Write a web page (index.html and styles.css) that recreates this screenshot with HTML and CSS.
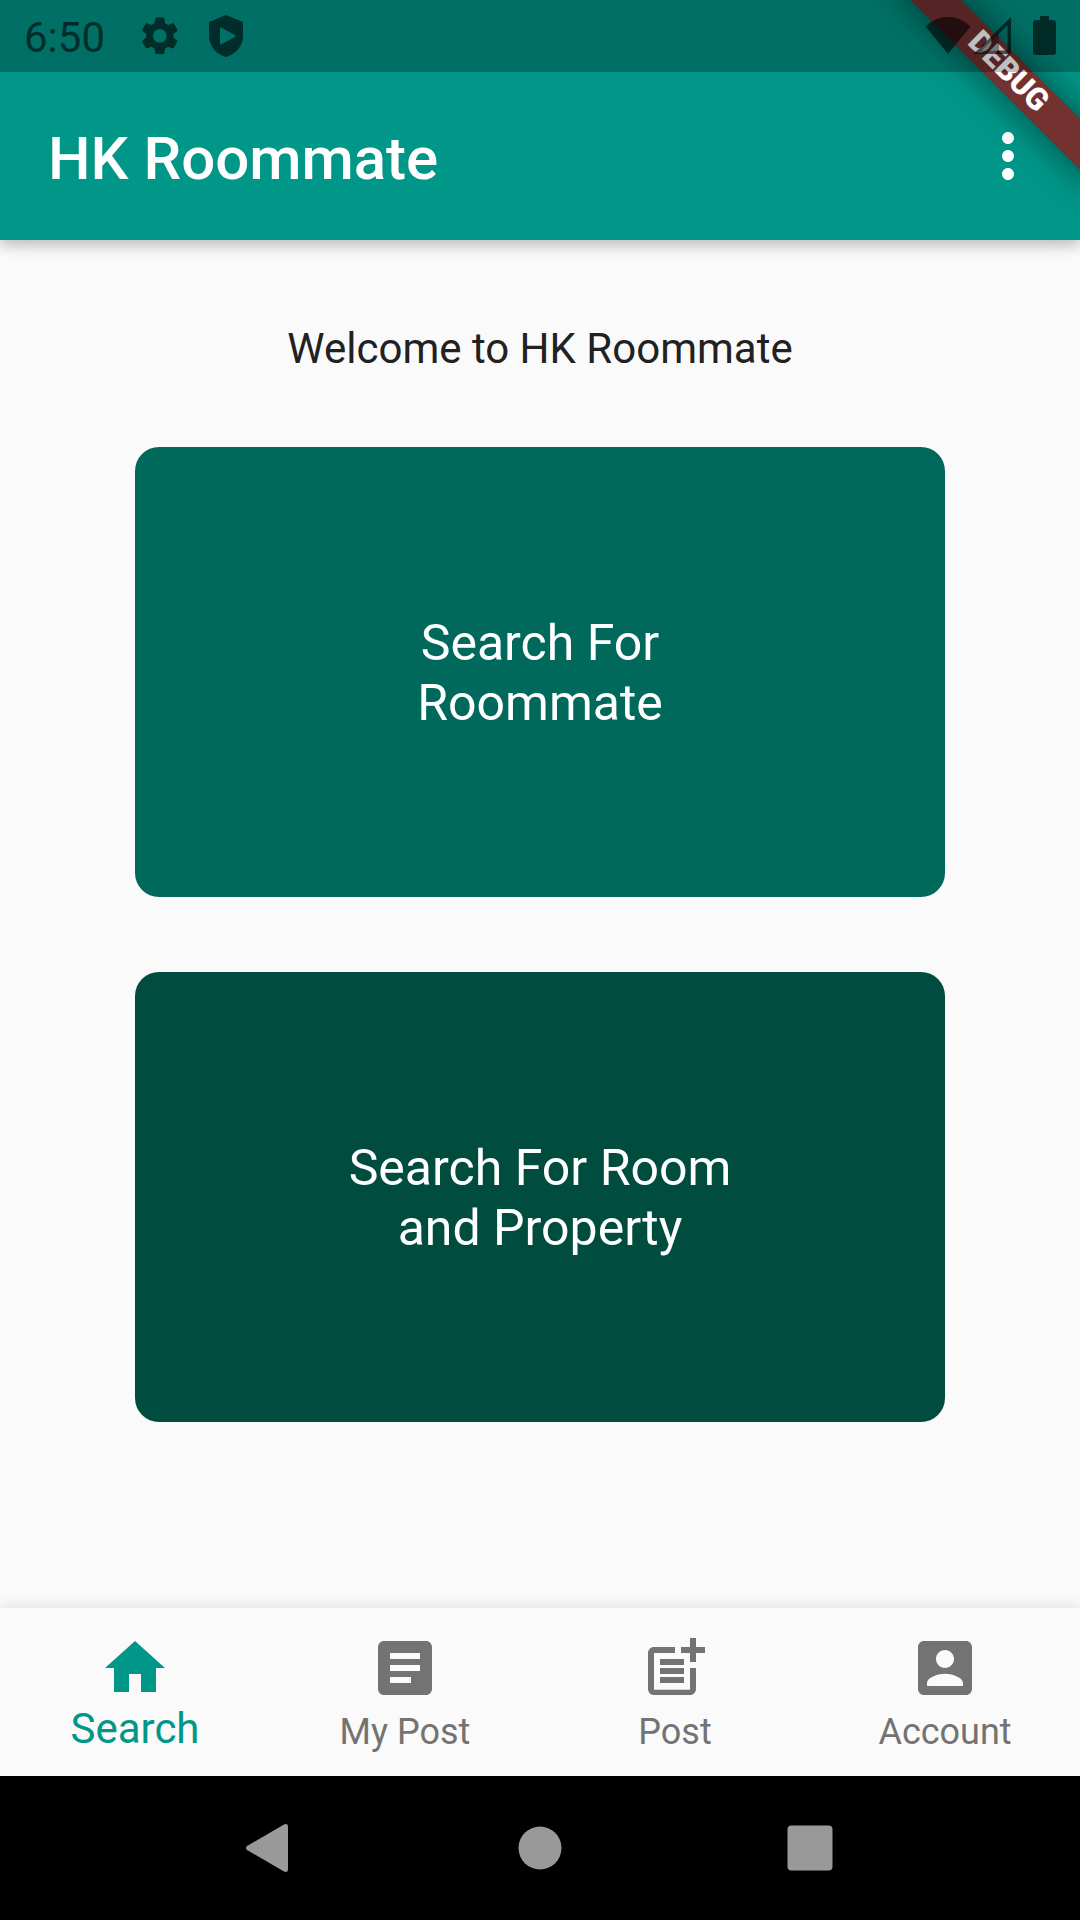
FILE: index.html
```html
<!DOCTYPE html>
<html lang="en">
<head>
<meta charset="utf-8">
<meta name="viewport" content="width=device-width, initial-scale=1">
<title>HK Roommate</title>
<link rel="stylesheet" href="styles.css">
</head>
<body>
<div class="app">
  <header class="top">
    <div class="status-bar">
      <div class="status-group status-left">
        <span class="clock">6:50</span>
        <svg class="status-icon" viewBox="0 0 48 48" aria-hidden="true"><path transform="translate(1 1) scale(1.9)" d="M19.14 12.94c.04-.3.06-.61.06-.94 0-.32-.02-.64-.07-.94l2.03-1.58c.18-.14.23-.41.12-.61l-1.92-3.32c-.12-.22-.37-.29-.59-.22l-2.39.96c-.5-.38-1.03-.7-1.62-.94l-.36-2.54c-.04-.24-.24-.41-.48-.41h-3.84c-.24 0-.43.17-.47.41l-.36 2.54c-.59.24-1.13.57-1.62.94l-2.39-.96c-.22-.08-.47 0-.59.22L2.74 8.87c-.12.21-.08.47.12.61l2.03 1.58c-.05.3-.09.63-.09.94s.02.64.07.94l-2.03 1.58c-.18.14-.23.41-.12.61l1.92 3.32c.12.22.37.29.59.22l2.39-.96c.5.38 1.03.7 1.62.94l.36 2.54c.05.24.24.41.48.41h3.84c.24 0 .44-.17.47-.41l.36-2.54c.59-.24 1.13-.56 1.62-.94l2.39.96c.22.08.47 0 .59-.22l1.92-3.32c.12-.22.07-.47-.12-.61l-2.01-1.58zM12 15.6c-1.98 0-3.6-1.62-3.6-3.6s1.62-3.6 3.6-3.6 3.6 1.62 3.6 3.6-1.62 3.6-3.6 3.6z"/></svg>
        <svg class="status-icon" viewBox="0 0 48 48" aria-hidden="true"><path fill-rule="evenodd" d="M24 3 41 10V24C41 34 34 42 24 45 14 42 7 34 7 24V10ZM18 16V31Q18 33 20 32L33 25Q34 24 33 23L20 16Q18 15 18 16Z"/></svg>
      </div>
      <div class="status-group status-right">
        <svg class="status-icon" viewBox="0 0 48 48" aria-hidden="true"><path d="M1.500 14.500Q11 5 24 5T46.500 14.500L24 42Z"/></svg>
        <svg class="status-icon signal" viewBox="4 0 44 48" aria-hidden="true"><path fill-rule="evenodd" d="M43 5V42H5.500ZM39.500 13 14 38.500H39.500Z"/><path opacity=".6" d="M31 21.500V38.500H14Z"/></svg>
        <svg class="status-icon battery" viewBox="0 0 24 48" aria-hidden="true"><path d="M8 4H17V8H21Q24 8 24 11V40Q24 43 21 43H4Q1 43 1 40V11Q1 8 4 8H8Z"/></svg>
      </div>
    </div>
    <div class="toolbar">
      <h1 class="title">HK Roommate</h1>
      <button class="more" type="button" aria-label="More options">
        <svg class="icon" viewBox="0 0 24 24" aria-hidden="true"><path d="M12 8c1.100 0 2-.9 2-2s-.9-2-2-2-2 .9-2 2 .9 2 2 2zm0 2c-1.100 0-2 .9-2 2s.9 2 2 2 2-.9 2-2-.9-2-2-2zm0 6c-1.100 0-2 .9-2 2s.9 2 2 2 2-.9 2-2-.9-2-2-2z"/></svg>
      </button>
    </div>
    <div class="ribbon-corner"><span class="ribbon">DEBUG</span></div>
  </header>

  <main class="content">
    <p class="welcome">Welcome to HK Roommate</p>
    <button class="card card-roommate" type="button">Search For<br>Roommate</button>
    <button class="card card-property" type="button">Search For Room<br>and Property</button>
  </main>

  <nav class="tabs">
    <a class="tab tab-active" href="#search" aria-current="page">
      <svg class="icon" viewBox="0 0 24 24" aria-hidden="true"><path d="M10 20v-6h4v6h5v-8h3L12 3 2 12h3v8z"/></svg>
      <span class="tab-label">Search</span>
    </a>
    <a class="tab" href="#my-post">
      <svg class="icon" viewBox="0 0 24 24" aria-hidden="true"><path d="M19 3H5c-1.100 0-2 .9-2 2v14c0 1.100.9 2 2 2h14c1.100 0 2-.9 2-2V5c0-1.100-.9-2-2-2zm-5 14H7v-2h7v2zm3-4H7v-2h10v2zm0-4H7V7h10v2z"/></svg>
      <span class="tab-label">My Post</span>
    </a>
    <a class="tab" href="#post">
      <svg class="icon" viewBox="0 0 24 24" aria-hidden="true"><path d="M17 19.220H5V7h7V5H5c-1.100 0-2 .9-2 2v12c0 1.100.9 2 2 2h12c1.100 0 2-.9 2-2v-7h-2zM19 2h-2v3h-3v2h3v3h2V7h3V5h-3zM7 9h8v2H7zM7 12h8v2H7zM7 15h8v2H7z"/></svg>
      <span class="tab-label">Post</span>
    </a>
    <a class="tab" href="#account">
      <svg class="icon" viewBox="0 0 24 24" aria-hidden="true"><path d="M3 5v14c0 1.100.89 2 2 2h14c1.100 0 2-.9 2-2V5c0-1.100-.9-2-2-2H5c-1.110 0-2 .9-2 2zm12 4c0 1.660-1.340 3-3 3s-3-1.340-3-3 1.340-3 3-3 3 1.340 3 3zm-9 8c0-2 4-3.100 6-3.100s6 1.100 6 3.100v1H6v-1z"/></svg>
      <span class="tab-label">Account</span>
    </a>
  </nav>

  <div class="system-nav">
    <button class="system-button" type="button" aria-label="Back">
      <svg class="icon" viewBox="0 0 72 72" aria-hidden="true"><path d="M13 34 50 12.500Q54 11 54 15V57Q54 61 50 59.500L13 38Q11 36 13 34Z"/></svg>
    </button>
    <button class="system-button" type="button" aria-label="Home">
      <svg class="icon" viewBox="0 0 72 72" aria-hidden="true"><circle cx="36" cy="36" r="21.500"/></svg>
    </button>
    <button class="system-button" type="button" aria-label="Recent apps">
      <svg class="icon" viewBox="0 0 72 72" aria-hidden="true"><rect x="13.500" y="13.500" width="45" height="45" rx="4"/></svg>
    </button>
  </div>
</div>
</body>
</html>
```
FILE: styles.css
```css
* {
  box-sizing: border-box;
}

body {
  margin: 0;
  font-family: Roboto, "Liberation Sans", sans-serif;
  background: #fafafa;
  color: #212121;
}

button {
  margin: 0;
  padding: 0;
  border: 0;
  background: none;
  font: inherit;
  color: inherit;
  cursor: pointer;
}

svg {
  display: block;
  fill: currentColor;
}

.icon {
  width: 72px;
  height: 72px;
}

.app {
  display: flex;
  flex-direction: column;
  min-height: 100vh;
}

/* Status bar and toolbar */
.top {
  position: relative;
  background: #009688;
  box-shadow: 0 6px 12px rgba(0, 0, 0, 0.2), 0 2px 24px rgba(0, 0, 0, 0.06);
}

.status-bar {
  position: relative;
  z-index: 2;
  display: flex;
  align-items: center;
  justify-content: space-between;
  height: 72px;
  padding: 0 24px;
  background: rgba(0, 0, 0, 0.25);
  color: rgba(0, 0, 0, 0.6);
}

.status-group {
  display: flex;
  align-items: center;
}

.status-left {
  gap: 18px;
}

.clock {
  padding: 3px 13px 0 0;
  font-size: 42px;
  line-height: 69px;
}

.status-icon {
  width: 48px;
  height: 48px;
}

.signal {
  width: 44px;
}

.battery {
  width: 24px;
  margin-left: 16px;
}

.toolbar {
  display: flex;
  align-items: center;
  justify-content: space-between;
  height: 168px;
  padding: 0 36px 0 48px;
  color: #fff;
}

.title {
  margin: 0;
  padding-top: 6px;
  font-size: 60px;
  font-weight: 500;
  line-height: 72px;
}

/* Corner ribbon, under the status bar's scrim */
.ribbon-corner {
  position: absolute;
  top: 0;
  right: 0;
  z-index: 1;
  width: 240px;
  height: 240px;
  overflow: hidden;
  pointer-events: none;
}

.ribbon {
  position: absolute;
  top: 84px;
  left: 100px;
  width: 280px;
  height: 36px;
  transform: rotate(45deg);
  transform-origin: 140px -84px;
  background: #733130;
  box-shadow: 0 0 36px rgba(0, 0, 0, 0.5);
  color: #fff;
  font-size: 31px;
  font-weight: 900;
  line-height: 34px;
  text-align: center;
}

/* Page content */
.content {
  flex: 1;
  display: flex;
  flex-direction: column;
  align-items: center;
  padding: 84px 0;
}

.welcome {
  margin: 0 0 73px;
  font-size: 42px;
  line-height: 50px;
}

.card {
  width: 75%;
  height: 450px;
  padding-top: 2px;
  border-radius: 24px;
  color: #fff;
  font-size: 50px;
  line-height: 60px;
}

.card + .card {
  margin-top: 75px;
}

.card-roommate {
  background: #00695c;
}

.card-property {
  background: #004d40;
}

/* Bottom tabs */
.tabs {
  display: grid;
  grid-template-columns: repeat(4, 1fr);
  height: 168px;
  padding-top: 24px;
  background: #fafafa;
  box-shadow: 0 -2px 12px rgba(0, 0, 0, 0.1);
}

.tab {
  display: flex;
  flex-direction: column;
  align-items: center;
  color: #737373;
  font-size: 36px;
  line-height: 56px;
  text-decoration: none;
}

.tab-active {
  color: #009688;
  font-size: 42px;
  line-height: 50px;
}

/* System navigation */
.system-nav {
  position: relative;
  display: grid;
  grid-template-columns: repeat(3, 1fr);
  justify-items: center;
  align-items: center;
  height: 144px;
  padding: 0 12.5%;
  background: #000;
  color: #999;
}
```
